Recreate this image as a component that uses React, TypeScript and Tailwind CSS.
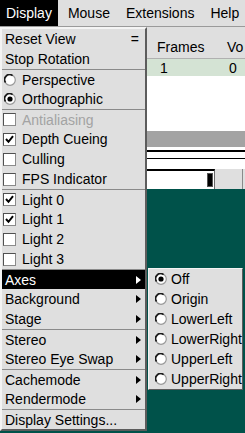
import React from "react";

type Entry = {
  label: string;
  kind?: "plain" | "check" | "radio";
  on?: boolean;
  acc?: string;
  arrow?: boolean;
  active?: boolean;
  disabled?: boolean;
  sep?: boolean;
};

const menu: Entry[] = [
  { label: "Reset View", acc: "=" },
  { label: "Stop Rotation" },
  { label: "Perspective", kind: "radio", sep: true },
  { label: "Orthographic", kind: "radio", on: true },
  { label: "Antialiasing", kind: "check", disabled: true, sep: true },
  { label: "Depth Cueing", kind: "check", on: true },
  { label: "Culling", kind: "check" },
  { label: "FPS Indicator", kind: "check" },
  { label: "Light 0", kind: "check", on: true, sep: true },
  { label: "Light 1", kind: "check", on: true },
  { label: "Light 2", kind: "check" },
  { label: "Light 3", kind: "check" },
  { label: "Axes", arrow: true, active: true, sep: true },
  { label: "Background", arrow: true },
  { label: "Stage", arrow: true },
  { label: "Stereo", arrow: true, sep: true },
  { label: "Stereo Eye Swap", arrow: true },
  { label: "Cachemode", arrow: true, sep: true },
  { label: "Rendermode", arrow: true },
  { label: "Display Settings...", sep: true },
];

const axes = ["Off", "Origin", "LowerLeft", "LowerRight", "UpperLeft", "UpperRight"];

const CheckBox = ({ on }: { on?: boolean }) => (
  <span className="w-[13px] h-[13px] flex items-center justify-center bg-white border border-t-[#505050] border-l-[#505050] border-r-[#8a8a8a] border-b-[#8a8a8a]">
    {on && (
      <svg width="9" height="9" viewBox="0 0 9 9">
        <path d="M1 4 L3.5 6.8 L8 1.2" stroke="#000" strokeWidth="2" fill="none" />
      </svg>
    )}
  </span>
);

const Radio = ({ on }: { on?: boolean }) => (
  <svg width="12" height="12" viewBox="0 0 12 12">
    <circle cx="6" cy="6" r="5.3" fill="#fff" stroke="#9a9a9a" strokeWidth="1.2" />
    <path d="M1.6 8.6 A5 5 0 0 1 8.6 1.6" stroke="#1a1a1a" strokeWidth="1.6" fill="none" />
    {on && <circle cx="6" cy="6" r="2.6" fill="#000" />}
  </svg>
);

const Arrow = ({ white }: { white?: boolean }) => (
  <svg width="5" height="8" viewBox="0 0 5 8">
    <polygon points="0,0 5,4 0,8" fill={white ? "#fff" : "#000"} />
  </svg>
);

const Item = ({ e }: { e: Entry }) => (
  <div className={`h-[20px] ${e.sep ? "border-t border-[#8a8a8a]" : ""}`}>
    <div
      className={`h-full flex items-center ${e.active ? "bg-black text-white" : ""} ${
        e.disabled ? "text-[#a3a3a3]" : ""
      }`}
    >
      {e.kind === "check" && (
        <span className="w-[20px] pl-[1px] flex">
          <CheckBox on={e.on} />
        </span>
      )}
      {e.kind === "radio" && (
        <span className="w-[20px] pl-[2px] flex">
          <Radio on={e.on} />
        </span>
      )}
      <span className={`flex-1 ${e.kind ? "" : "pl-[3px]"}`}>{e.label}</span>
      {e.acc && <span className="pr-[6px]">{e.acc}</span>}
      {e.arrow && (
        <span className="pr-[4px] flex">
          <Arrow white={e.active} />
        </span>
      )}
    </div>
  </div>
);

export default function App() {
  return (
    <div className="relative w-[245px] h-[433px] overflow-hidden bg-[#00524a] text-[14px] leading-none text-black font-['Liberation_Sans',Arial,sans-serif]">
      {/* menubar */}
      <div className="h-[27px] flex bg-[#dfdfdf] border-b border-[#9a9a9a]">
        <div className="bg-black text-white px-[6px] flex items-center">Display</div>
        <div className="ml-[10px] flex items-center gap-[16px]">
          <span>Mouse</span>
          <span>Extensions</span>
          <span>Help</span>
        </div>
      </div>

      {/* app behind the menu */}
      <div className="pl-[147px] flex flex-col">
        <div className="h-[32px] bg-[#dfdfdf] border-b border-[#b0b0b0] flex items-end pb-[4px] overflow-hidden whitespace-nowrap">
          <span className="w-[80px] shrink-0 pl-[10px]">Frames</span>
          <span className="shrink-0">Vo</span>
        </div>
        <div className="h-[17px] bg-[#d4e3d4] flex items-center">
          <span className="w-[82px] shrink-0 pl-[13px]">1</span>
          <span>0</span>
        </div>
        <div className="h-[55px] bg-white" />
        <div className="h-[16px] bg-[#a3a3a3]" />
        <div className="h-[3px] bg-white" />
        <div className="h-[2px] bg-black" />
        <div className="h-[6px] bg-white" />
        <div className="h-[1px] bg-black" />
        <div className="h-[10px] bg-white" />
        <div className="h-[20px] flex bg-[#dfdfdf]">
          <div className="w-[68px] bg-white border-t-2 border-t-black border-r border-r-[#6a6a6a] flex items-center justify-end pr-[1px]">
            <span className="w-[6px] h-[14px] bg-black border border-[#555]" />
          </div>
          <div className="flex-1 border-r border-[#8a8a8a] mr-[2px]" />
        </div>
      </div>

      {/* Display dropdown */}
      <div className="absolute left-0 top-[27px] w-[147px] bg-[#dfdfdf] border-2 border-t-[#f4f4f4] border-l-[#f4f4f4] border-r-[#5c5c5c] border-b-[#5c5c5c]">
        {menu.map((e) => (
          <Item key={e.label} e={e} />
        ))}
      </div>

      {/* Axes submenu */}
      <div className="absolute left-[148px] top-[268px] w-[95px] bg-[#dfdfdf] border border-t-[#f4f4f4] border-l-[#f4f4f4] border-r-[#5c5c5c] border-b-[#5c5c5c]">
        {axes.map((a, i) => (
          <div key={a} className="h-[20px] flex items-center pl-[6px]">
            <Radio on={i === 0} />
            <span className="pl-[4px]">{a}</span>
          </div>
        ))}
      </div>
    </div>
  );
}
